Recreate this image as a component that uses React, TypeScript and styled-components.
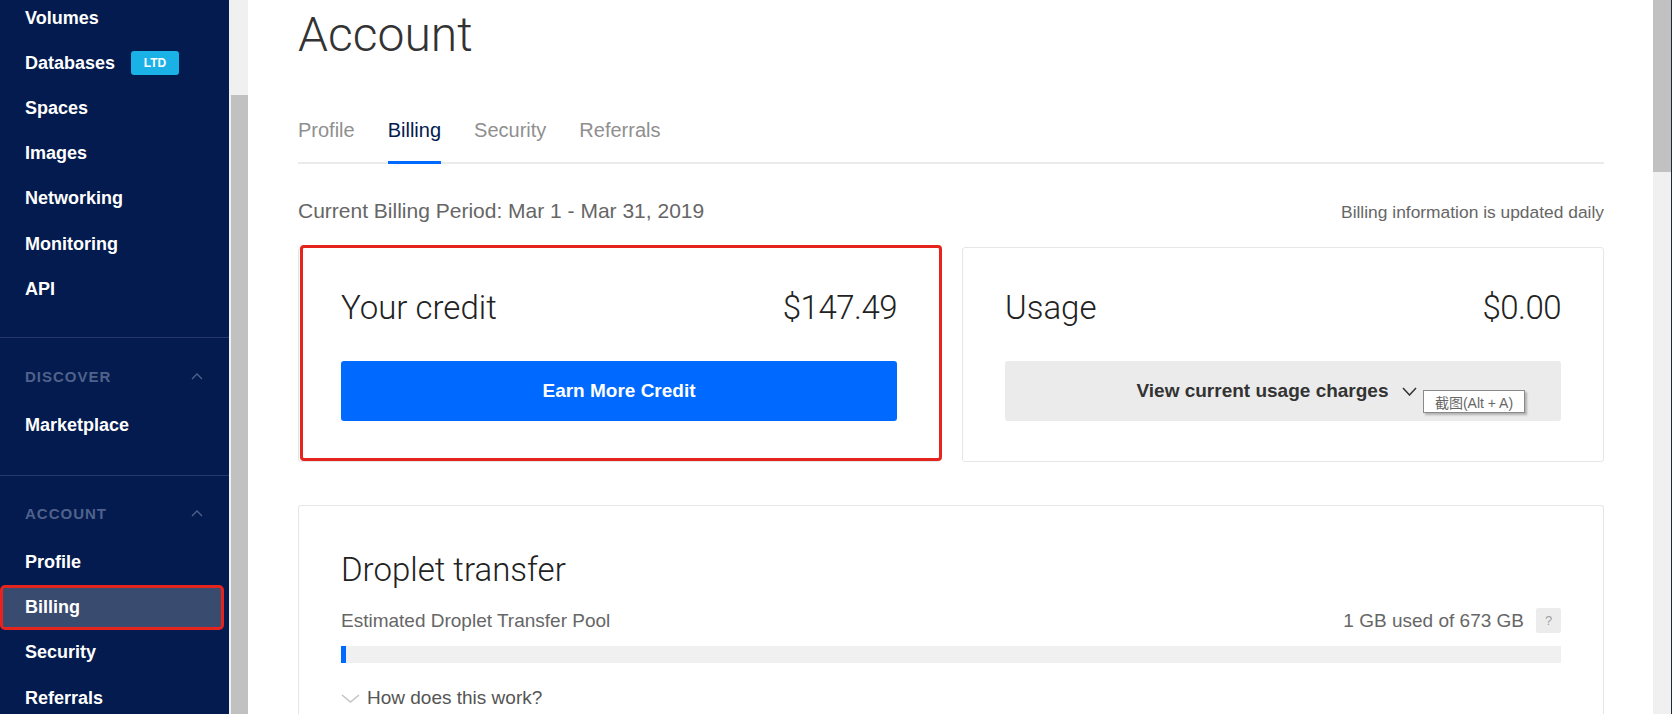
import React from 'react';
import styled, { createGlobalStyle } from 'styled-components';

const mainItems = ['Volumes', 'Databases', 'Spaces', 'Images', 'Networking', 'Monitoring', 'API'];
const accountItems = ['Profile', 'Billing', 'Security', 'Referrals'];
const tabs = ['Profile', 'Billing', 'Security', 'Referrals'];

const usedGb = 1;
const poolGb = 673;

const ChevronUp = () => (
    <svg width="12" height="7" viewBox="0 0 12 7" fill="none">
        <polyline points="1,6 6,1 11,6" stroke="#50628c" strokeWidth="1.3" />
    </svg>
);

const ChevronDown: React.FC<{ w: number; h: number; color: string }> = ({ w, h, color }) => (
    <svg width={w} height={h} viewBox={`0 0 ${w} ${h}`} fill="none">
        <polyline points={`1,1 ${w / 2},${h - 1} ${w - 1},1`} stroke={color} strokeWidth="1.5" />
    </svg>
);

const App: React.FC = () => {
    const fill = Math.max((usedGb / poolGb) * 100, 0.4);
    return (
        <Page>
            <GlobalStyle />
            <Sidebar>
                <NavGroup>
                    {mainItems.map((item) => (
                        <NavItem key={item}>
                            {item}
                            {item === 'Databases' && <Badge>LTD</Badge>}
                        </NavItem>
                    ))}
                </NavGroup>
                <NavSection>
                    <SectionHeader>
                        DISCOVER
                        <ChevronUp />
                    </SectionHeader>
                    <NavItem>Marketplace</NavItem>
                </NavSection>
                <NavSection $last>
                    <SectionHeader>
                        ACCOUNT
                        <ChevronUp />
                    </SectionHeader>
                    {accountItems.map((item) => (
                        <NavItem key={item} $active={item === 'Billing'}>
                            {item}
                        </NavItem>
                    ))}
                </NavSection>
            </Sidebar>
            <SideScroll>
                <Thumb $top={95} />
            </SideScroll>
            <Main>
                <Title>Account</Title>
                <TabBar>
                    {tabs.map((tab) => (
                        <Tab key={tab} $active={tab === 'Billing'}>
                            {tab}
                        </Tab>
                    ))}
                </TabBar>
                <PeriodRow>
                    <Period>Current Billing Period: Mar 1 - Mar 31, 2019</Period>
                    <PeriodNote>Billing information is updated daily</PeriodNote>
                </PeriodRow>
                <CardGrid>
                    <Card $marked>
                        <CardHeader>
                            <CardTitle>Your credit</CardTitle>
                            <Amount>$147.49</Amount>
                        </CardHeader>
                        <PrimaryButton>Earn More Credit</PrimaryButton>
                    </Card>
                    <Card>
                        <CardHeader>
                            <CardTitle>Usage</CardTitle>
                            <Amount>$0.00</Amount>
                        </CardHeader>
                        <GreyButton>
                            View current usage charges
                            <ChevronDown w={15} h={9} color="#333" />
                            <Tooltip>截图(Alt + A)</Tooltip>
                        </GreyButton>
                    </Card>
                </CardGrid>
                <TransferCard>
                    <CardTitle>Droplet transfer</CardTitle>
                    <PoolRow>
                        <Muted>Estimated Droplet Transfer Pool</Muted>
                        <PoolUsage>
                            <Muted>
                                {usedGb} GB used of {poolGb} GB
                            </Muted>
                            <HelpBox>?</HelpBox>
                        </PoolUsage>
                    </PoolRow>
                    <Bar>
                        <BarFill style={{ width: `${fill}%` }} />
                    </Bar>
                    <HowRow>
                        <ChevronDown w={19} h={9} color="#c4c4c4" />
                        How does this work?
                    </HowRow>
                </TransferCard>
            </Main>
            <MainScroll>
                <Thumb $height={172} />
            </MainScroll>
        </Page>
    );
};

const GlobalStyle = createGlobalStyle`
    html, body {
        margin: 0;
        padding: 0;
        overflow: hidden;
    }
    body {
        font-family: "Liberation Sans", Arial, sans-serif;
        background: #ffffff;
    }
    * {
        box-sizing: border-box;
    }
`;

const Page = styled.div`
    display: flex;
    height: 714px;
    overflow: hidden;
`;

const Sidebar = styled.nav`
    width: 229px;
    flex-shrink: 0;
    background: #031b4e;
    overflow: hidden;
`;

const NavGroup = styled.div`
    margin-top: -4.5px;
    padding-bottom: 25.5px;
    border-bottom: 1px solid #26396a;
`;

const NavSection = styled.div<{ $last?: boolean }>`
    padding-top: 28px;
    padding-bottom: 26.5px;
    border-bottom: ${(p) => (p.$last ? 'none' : '1px solid #26396a')};
`;

const SectionHeader = styled.div`
    display: flex;
    justify-content: space-between;
    align-items: center;
    height: 20px;
    padding: 0 26px 0 25px;
    margin-bottom: 16.5px;
    font-size: 15px;
    font-weight: 700;
    letter-spacing: 1px;
    color: #50628c;
`;

const NavItem = styled.div<{ $active?: boolean }>`
    display: flex;
    align-items: center;
    gap: 16px;
    height: 45.2px;
    width: ${(p) => (p.$active ? '224px' : 'auto')};
    padding-left: ${(p) => (p.$active ? '22px' : '25px')};
    border: ${(p) => (p.$active ? '3px solid #e4241d' : 'none')};
    border-radius: 5px;
    background: ${(p) => (p.$active ? '#3a4b70' : 'transparent')};
    color: #ffffff;
    font-size: 18px;
    font-weight: 700;
`;

const Badge = styled.span`
    display: inline-flex;
    align-items: center;
    justify-content: center;
    width: 48px;
    height: 24px;
    border-radius: 3px;
    background: #19b1e6;
    color: #ffffff;
    font-size: 12px;
    font-weight: 700;
`;

const SideScroll = styled.div`
    width: 19px;
    flex-shrink: 0;
    display: flex;
    flex-direction: column;
    border-left: 2px solid #eef0f3;
    background: #f0f0f0;
`;

const MainScroll = styled.div`
    width: 19px;
    flex-shrink: 0;
    display: flex;
    flex-direction: column;
    background: #f0f0f0;
    border-right: 1px solid #1c2848;
`;

const Thumb = styled.div<{ $top?: number; $height?: number }>`
    margin-top: ${(p) => p.$top ?? 0}px;
    height: ${(p) => (p.$height ? `${p.$height}px` : 'auto')};
    flex: ${(p) => (p.$height ? '0 0 auto' : '1')};
    background: #c1c1c1;
`;

const Main = styled.main`
    flex: 1;
    min-width: 0;
    display: flex;
    flex-direction: column;
    padding: 0 49px 0 50px;
    overflow: hidden;
`;

const Title = styled.h1`
    margin: 11px 0 0;
    font-family: Roboto, "Liberation Sans", sans-serif;
    font-size: 48px;
    line-height: 48px;
    font-weight: 300;
    color: #333333;
`;

const TabBar = styled.div`
    display: flex;
    gap: 33px;
    margin-top: 59px;
    border-bottom: 2px solid #ebebeb;
`;

const Tab = styled.div<{ $active?: boolean }>`
    font-size: 20px;
    line-height: 24px;
    padding-bottom: 19px;
    margin-bottom: -2px;
    border-bottom: 3px solid ${(p) => (p.$active ? '#0069ff' : 'transparent')};
    color: ${(p) => (p.$active ? '#031b4e' : '#8f8f8f')};
`;

const PeriodRow = styled.div`
    display: flex;
    justify-content: space-between;
    align-items: baseline;
    margin-top: 35px;
`;

const Period = styled.div`
    font-size: 21px;
    line-height: 24px;
    color: #666666;
`;

const PeriodNote = styled.div`
    font-size: 17.4px;
    color: #666666;
`;

const CardGrid = styled.div`
    display: grid;
    grid-template-columns: 1fr 1fr;
    column-gap: 22px;
    margin-top: 24px;
`;

const Card = styled.div<{ $marked?: boolean }>`
    position: relative;
    padding: 40px 42px;
    border: 1px solid #e6e6e6;
    border-radius: 3px;
    background: #ffffff;

    &::after {
        content: '';
        display: ${(p) => (p.$marked ? 'block' : 'none')};
        position: absolute;
        inset: -3px -3px 0px 1px;
        border: 3px solid #e4241d;
        border-radius: 4px;
        pointer-events: none;
    }
`;

const CardHeader = styled.div`
    display: flex;
    justify-content: space-between;
    align-items: baseline;
    height: 40px;
    margin-bottom: 33px;
`;

const CardTitle = styled.div`
    font-family: Roboto, "Liberation Sans", sans-serif;
    font-size: 33px;
    line-height: 40px;
    font-weight: 300;
    color: #222222;
`;

const Amount = styled(CardTitle)`
    letter-spacing: -0.5px;
`;

const PrimaryButton = styled.button`
    display: flex;
    align-items: center;
    justify-content: center;
    width: 100%;
    height: 60px;
    border: none;
    border-radius: 3px;
    background: #0069ff;
    color: #ffffff;
    font-family: "Liberation Sans", Arial, sans-serif;
    font-size: 19px;
    font-weight: 700;
`;

const GreyButton = styled(PrimaryButton)`
    position: relative;
    gap: 13px;
    padding-right: 19px;
    background: #ebebeb;
    color: #333333;
`;

const Tooltip = styled.span`
    position: absolute;
    left: 418px;
    top: 29px;
    width: 102px;
    height: 23px;
    display: flex;
    align-items: center;
    justify-content: center;
    background: #ffffff;
    border: 1px solid #8a8a8a;
    box-shadow: 2px 2px 2px rgba(0, 0, 0, 0.25);
    font-family: "Liberation Sans", "Noto Sans CJK SC", sans-serif;
    font-size: 14px;
    font-weight: 400;
    color: #666666;
`;

const TransferCard = styled.div`
    flex: 1;
    margin-top: 43px;
    padding: 44px 42px 0;
    border: 1px solid #e6e6e6;
    border-bottom: none;
    border-radius: 3px 3px 0 0;
`;

const PoolRow = styled.div`
    display: flex;
    justify-content: space-between;
    align-items: center;
    height: 25px;
    margin-top: 18px;
`;

const PoolUsage = styled.div`
    display: flex;
    align-items: center;
    gap: 12px;
`;

const Muted = styled.span`
    font-size: 19px;
    color: #666666;
`;

const HelpBox = styled.span`
    display: flex;
    align-items: center;
    justify-content: center;
    width: 25px;
    height: 25px;
    border-radius: 2px;
    background: #ececec;
    color: #a0a0a0;
    font-size: 13px;
`;

const Bar = styled.div`
    height: 17px;
    margin-top: 13px;
    background: #f0f0f0;
`;

const BarFill = styled.div`
    height: 100%;
    background: #0069ff;
`;

const HowRow = styled.div`
    display: flex;
    align-items: center;
    gap: 7px;
    margin-top: 24px;
    font-size: 19px;
    line-height: 22px;
    color: #555555;
`;

export default App;
